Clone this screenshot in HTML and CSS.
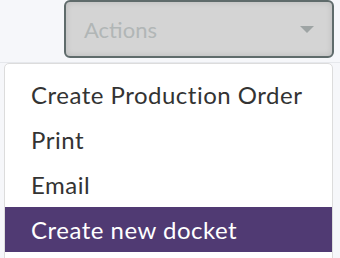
FILE: index.html
```html
<!DOCTYPE html>
<html lang="en">
<head>
    <meta charset="UTF-8">
    <meta name="viewport" content="width=device-width, initial-scale=1.0">
    <title>Actions</title>
    <link rel="stylesheet" href="styles.css">
</head>
<body>
<div class="toolbar">
    <button type="button" class="actions-btn" disabled>
        <span>Actions</span>
        <span class="caret"></span>
    </button>
</div>

<ul class="menu">
    <li class="menu-item">Create Production Order</li>
    <li class="menu-item">Print</li>
    <li class="menu-item">Email</li>
    <li class="menu-item active">Create new docket</li>
</ul>
</body>
</html>
```

FILE: styles.css
```css
body {
    margin: 0;
    font-family: 'Lato', sans-serif;
    background: #f6f7fa;
    color: #333;
    height: 258px;
    overflow: hidden;
}

.toolbar {
    display: flex;
    justify-content: flex-end;
    padding: 0 6px 0 0;
    height: 62px;
    border-bottom: 1px solid #e6e8ec;
}

.actions-btn {
    width: 270px;
    height: 58px;
    display: flex;
    align-items: center;
    justify-content: space-between;
    padding: 0 18px 0 18px;
    background: #d4d4d4;
    border: 2px solid #5f6b6b;
    border-radius: 6px;
    box-shadow: inset 0 0 6px rgba(0, 0, 0, 0.12);
    font-family: inherit;
    font-size: 22px;
    color: #b1b6b6;
}

.caret {
    width: 0;
    height: 0;
    border-left: 7px solid transparent;
    border-right: 7px solid transparent;
    border-top: 7px solid #9ea4a4;
}

.menu {
    list-style: none;
    margin: 0 7px 0 4px;
    padding: 8px 0 12px;
    background: #fff;
    border: 1px solid #dcdcdc;
    border-radius: 5px;
}

.menu-item {
    height: 45px;
    line-height: 45px;
    padding: 0 26px;
    font-size: 24px;
    letter-spacing: 0.5px;
}

.menu-item.active {
    background: #503a73;
    color: #fff;
}
```
